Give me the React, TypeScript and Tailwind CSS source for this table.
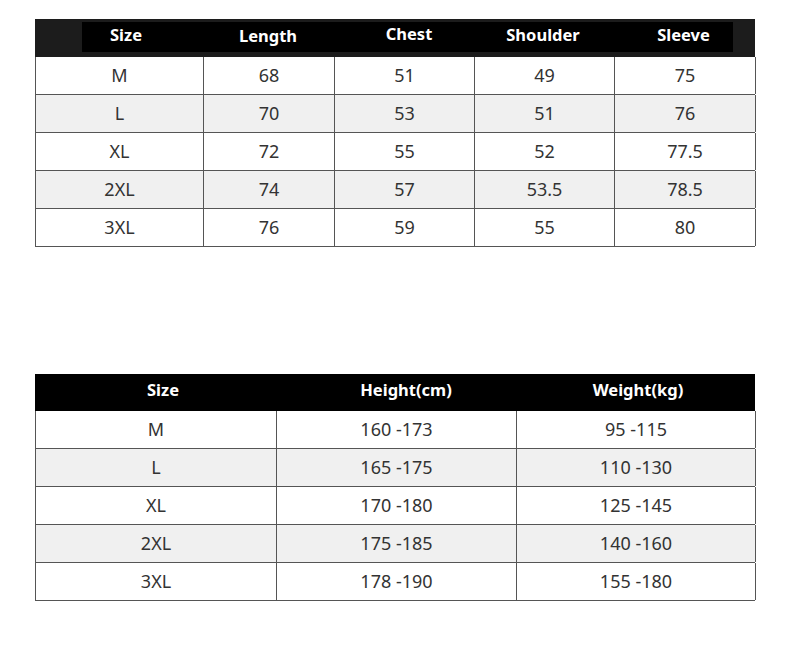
const font = { fontFamily: '"Noto Sans", "Noto Sans CJK KR", sans-serif' };

const sizeRows = [
  ['M', '68', '51', '49', '75'],
  ['L', '70', '53', '51', '76'],
  ['XL', '72', '55', '52', '77.5'],
  ['2XL', '74', '57', '53.5', '78.5'],
  ['3XL', '76', '59', '55', '80'],
];

const fitRows = [
  ['M', '160 -173', '95 -115'],
  ['L', '165 -175', '110 -130'],
  ['XL', '170 -180', '125 -145'],
  ['2XL', '175 -185', '140 -160'],
  ['3XL', '178 -190', '155 -180'],
];

function MeasureTable() {
  const cols = 'grid-cols-[168px_131px_140px_140px_141px]';
  return (
    <div className="w-[720px]">
      <div className="h-[38px] bg-[#1c1c1c] pt-[3px] pl-[47px] pr-[22px]">
        <div className="grid h-[30px] grid-cols-[88px_196px_86px_182px_99px] items-center bg-black text-[16.5px] font-bold text-white">
          <span className="pb-[4px] text-center">Size</span>
          <span className="pb-[2px] text-center">Length</span>
          <span className="pb-[6px] text-center">Chest</span>
          <span className="pb-[4px] text-center">Shoulder</span>
          <span className="pb-[4px] text-center">Sleeve</span>
        </div>
      </div>
      <div className="border-l border-[#555]">
        {sizeRows.map((row, i) => (
          <div
            key={row[0]}
            className={`grid h-[38px] ${cols} border-b border-[#555] ${i % 2 ? 'bg-[#f0f0f0]' : 'bg-white'}`}
          >
            {row.map((c, j) => (
              <span key={j} className="flex items-center justify-center border-r border-[#555] text-[18px] text-[#333]">
                {c}
              </span>
            ))}
          </div>
        ))}
      </div>
    </div>
  );
}

function FitTable() {
  return (
    <div className="w-[720px]">
      <div className="grid h-[37px] grid-cols-[256px_230px_234px] items-center bg-black pb-[4px] text-[16.5px] font-bold text-white">
        <span className="text-center">Size</span>
        <span className="text-center">Height(cm)</span>
        <span className="text-center">Weight(kg)</span>
      </div>
      <div className="border-l border-[#555]">
        {fitRows.map((row, i) => (
          <div
            key={row[0]}
            className={`grid h-[38px] grid-cols-[241px_240px_239px] border-b border-[#555] ${i % 2 ? 'bg-[#f0f0f0]' : 'bg-white'}`}
          >
            {row.map((c, j) => (
              <span key={j} className="flex items-center justify-center border-r border-[#555] text-[18px] text-[#333]">
                {c}
              </span>
            ))}
          </div>
        ))}
      </div>
    </div>
  );
}

export default function App() {
  return (
    <div className="h-[661px] w-[790px] bg-white pl-[35px] pt-[19px]" style={font}>
      <MeasureTable />
      <div className="h-[127px]" />
      <FitTable />
    </div>
  );
}
